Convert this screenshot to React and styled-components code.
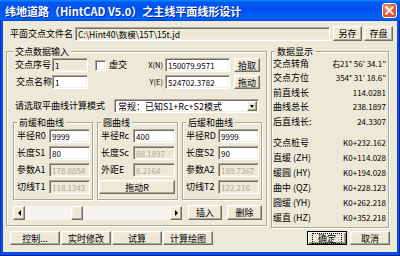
import React from "react";
import styled, { createGlobalStyle, css } from "styled-components";

const FONT = `"Noto Sans CJK SC", "Noto Sans", sans-serif`;

const GlobalStyle = createGlobalStyle`
  html, body { margin: 0; padding: 0; background: #ECE9D8; }
  body { font-family: ${FONT}; font-size: 9px; color: #000; }
  *, *::before, *::after { box-sizing: border-box; }
`;

const sunken = css`
  border: 1px solid;
  border-color: #ACA899 #FFFFFF #FFFFFF #ACA899;
  box-shadow: inset 1px 1px 0 #716F64, inset -1px -1px 0 #F1EFE2;
`;
const raised = css`
  border: 1px solid;
  border-color: #FFFFFF #716F64 #716F64 #FFFFFF;
  box-shadow: inset -1px -1px 0 #ACA899, inset 1px 1px 0 #F1EFE2;
`;

const Window = styled.div`
  width: 400px;
  height: 256px;
  display: flex;
  flex-direction: column;
  overflow: hidden;
`;
const TitleBar = styled.div`
  flex: none;
  height: 21px;
  display: flex;
  align-items: center;
  justify-content: space-between;
  padding: 0 3px 0 5px;
  background: linear-gradient(to bottom, #0A8CFF 0%, #0058EE 12%, #0050EE 45%, #0063FA 85%, #005AF5 93%, #0040D8 100%);
`;
const Title = styled.span`
  color: #fff;
  font-family: ${FONT};
  font-weight: 700;
  font-size: 11px;
  line-height: 13px;
  padding-top: 1px;
  white-space: nowrap;
  text-shadow: 1px 1px 0 #0A2A9A;
`;
const CloseBtn = styled.div`
  width: 15px;
  height: 15px;
  border: 1px solid #fff;
  border-radius: 3px;
  background: radial-gradient(circle at 35% 30%, #F2A58C 0%, #E5603A 45%, #C8401C 100%);
  display: flex;
  align-items: center;
  justify-content: center;
`;
const Frame = styled.div`
  flex: 1;
  display: flex;
  padding: 0 3px 4px 3px;
  background: #0A4FE0;
  box-shadow: inset 1px 0 0 #0831D9, inset -1px 0 0 #001EA0, inset 0 -1px 0 #001EA0;
`;
const Body = styled.div`
  flex: 1;
  background: #ECE9D8;
  display: flex;
  flex-direction: column;
  padding: 0 4px 0 3px;
`;

const Text = styled.span`
  font-size: ${(p) => p.$size || 9}px;
  line-height: ${(p) => p.$lh || 14}px;
  white-space: nowrap;
  color: ${(p) => (p.$muted ? "#ACA899" : "#000")};
  margin-left: ${(p) => p.$ml || 0}px;
  text-align: ${(p) => p.$align || "left"};
  padding-right: ${(p) => p.$pr || 0}px;
`;

const Field = styled.input`
  display: block;
  width: ${(p) => (p.$w ? `${p.$w}px` : "100%")};
  height: 14px;
  margin: 0;
  padding: 0 0 0 2px;
  font-family: ${FONT};
  font-size: 8px;
  color: ${(p) => (p.$off ? "#ACA899" : "#000")};
  background: ${(p) => (p.$white ? "#FFFFFF" : "#ECE9D8")};
  outline: none;
  ${sunken};
`;

const Btn = styled.button`
  width: ${(p) => (p.$w ? `${p.$w}px` : "100%")};
  height: ${(p) => p.$h || 15}px;
  margin: 0 0 0 ${(p) => p.$ml || 0}px;
  padding: 0;
  font-family: ${FONT};
  font-size: 9px;
  color: #000;
  background: #ECE9D8;
  display: flex;
  align-items: center;
  justify-content: center;
  justify-self: end;
  white-space: nowrap;
  ${raised};
  ${(p) =>
    p.$default &&
    css`
      border-color: #000;
      box-shadow: inset 1px 1px 0 #fff, inset -1px -1px 0 #716F64, inset -2px -2px 0 #ACA899;
    `}
`;
const FocusText = styled.span`
  border: 1px dotted #000;
  padding: 0 5px;
  line-height: 9px;
`;

const FileRow = styled.div`
  display: flex;
  align-items: center;
  height: 15px;
  margin-top: 5px;
`;

const MainRow = styled.div`
  display: flex;
  align-items: flex-start;
  gap: 4px;
  margin-top: 5px;
`;

const GroupBox = styled.fieldset`
  margin: 0;
  min-width: 0;
  width: ${(p) => p.$w}px;
  height: ${(p) => p.$h}px;
  padding: ${(p) => p.$pad};
  border: 1px solid #ACA899;
  box-shadow: inset 1px 1px 0 #fff, 1px 1px 0 #fff;
`;
const Legend = styled.legend`
  padding: 0 2px;
  margin-left: ${(p) => p.$ml || 0}px;
  font-size: 9px;
  line-height: 11px;
  background: #ECE9D8;
`;

const CoordGrid = styled.div`
  display: grid;
  grid-template-columns: 39px 36px 55px 22px 65px 30px;
  grid-auto-rows: 14px;
  row-gap: 3px;
  align-items: center;
`;
const CheckWrap = styled.div`
  display: flex;
  align-items: center;
  padding-left: 7px;
`;
const Check = styled.span`
  width: 11px;
  height: 11px;
  background: #fff;
  ${sunken};
`;

const ModeRow = styled.div`
  display: flex;
  align-items: center;
  justify-content: space-between;
  height: 14px;
  margin-top: 10px;
  padding: 0 3px 0 2px;
`;
const Combo = styled.div`
  width: 145px;
  height: 14px;
  display: flex;
  align-items: stretch;
  background: #fff;
  ${sunken};
  padding: 1px;
`;
const ComboText = styled.span`
  flex: 1;
  font-size: 9px;
  line-height: 11px;
  padding-left: 2px;
  white-space: nowrap;
`;
const ComboBtn = styled.span`
  width: 10px;
  background: #ECE9D8;
  display: flex;
  align-items: center;
  justify-content: center;
  ${raised};
`;
const Tri = styled.span`
  width: 0;
  height: 0;
  ${(p) =>
    p.$dir === "down"
      ? css`
          border-left: 2.5px solid transparent;
          border-right: 2.5px solid transparent;
          border-top: 3px solid #000;
        `
      : p.$dir === "left"
      ? css`
          border-top: 3px solid transparent;
          border-bottom: 3px solid transparent;
          border-right: 3px solid #000;
        `
      : css`
          border-top: 3px solid transparent;
          border-bottom: 3px solid transparent;
          border-left: 3px solid #000;
        `}
`;

const SubRow = styled.div`
  display: flex;
  gap: 4px;
  margin-top: 4px;
`;
const SubGrid = styled.div`
  display: grid;
  grid-template-columns: 32px 1fr;
  grid-auto-rows: 14px;
  row-gap: 3px;
  align-items: center;
`;
const SpanBtn = styled(Btn)`
  grid-column: 1 / -1;
  width: calc(100% + 2px);
  margin-left: -1px;
  height: 14px;
`;

const ScrollRow = styled.div`
  display: flex;
  align-items: center;
  height: 15px;
  margin-top: 5px;
`;
const Scroll = styled.div`
  width: 169px;
  height: 14px;
  display: flex;
  background: #F5F4EF;
`;
const ScrollBtn = styled.span`
  width: 12px;
  height: 14px;
  flex: none;
  background: #ECE9D8;
  display: flex;
  align-items: center;
  justify-content: center;
  ${raised};
`;
const Thumb = styled(ScrollBtn)`
  margin-left: ${(p) => p.$offset}px;
`;
const Track = styled.span`
  flex: 1;
`;

const DataList = styled.div`
  margin-top: -1px;
  display: flex;
  flex-direction: column;
`;
const DataRow = styled.div`
  height: ${(p) => p.$h || 15}px;
  display: flex;
  align-items: center;
  justify-content: space-between;
`;
const DataGap = styled.div`
  height: 6px;
`;

const BottomRow = styled.div`
  display: flex;
  align-items: center;
  gap: 1px;
  height: 14px;
  margin-top: 3px;
  padding: 0 3px 0 4px;
`;
const Push = styled.div`
  flex: 1;
`;

const leftFields = [
  ["半径R0", "9999", false],
  ["长度S1", "80", false],
  ["参数A1", "178.8854", true],
  ["切线T1", "118.1343", true],
];
const midFields = [
  ["半径Rc", "400", false],
  ["长度Sc", "88.1897", true],
  ["外距E", "8.2164", true],
];
const rightFields = [
  ["半径RD", "9999", false],
  ["长度S2", "90", false],
  ["参数A2", "189.7367", true],
  ["切线T2", "122.216", true],
];
const dataTop = [
  ["交点转角", "右21° 56′ 34.1″"],
  ["交点方位", "354° 31′ 18.6″"],
  ["前直线长", "114.0281"],
  ["曲线总长", "238.1897"],
  ["后直线长:", "24.3307"],
];
const dataBottom = [
  ["交点桩号", "K0+232.162"],
  ["直缓 (ZH)", "K0+114.028"],
  ["缓圆 (HY)", "K0+194.028"],
  ["曲中 (QZ)", "K0+228.123"],
  ["圆缓 (YH)", "K0+262.218"],
  ["缓直 (HZ)", "K0+352.218"],
];

function FieldRows({ rows }) {
  return rows.map(([label, value, off]) => (
    <React.Fragment key={label}>
      <Text>{label}</Text>
      <Field readOnly value={value} $white={!off} $off={off} />
    </React.Fragment>
  ));
}

function DataRows({ rows, h }) {
  return rows.map(([k, v]) => (
    <DataRow key={k} $h={h}>
      <Text $lh={11}>{k}</Text>
      <Text $lh={11} $size={8}>{v}</Text>
    </DataRow>
  ));
}

export default function App() {
  return (
    <>
      <GlobalStyle />
      <Window>
        <TitleBar>
          <Title>纬地道路（HintCAD V5.0）之主线平面线形设计</Title>
          <CloseBtn>
            <svg width="9" height="9" viewBox="0 0 9 9">
              <path d="M1 1 L8 8 M8 1 L1 8" stroke="#fff" strokeWidth="1.7" strokeLinecap="square" />
            </svg>
          </CloseBtn>
        </TitleBar>
        <Frame>
          <Body>
            <FileRow>
              <Text $ml={4} style={{ width: 65 }}>平面交点文件名</Text>
              <Field readOnly value="C:\Hint40\数模\15T\15t.jd" $w={255} style={{ fontSize: 8.5 }} />
              <Btn $w={29} $ml={3}>另存</Btn>
              <Btn $w={29} $ml={2}>存盘</Btn>
            </FileRow>

            <MainRow>
              <GroupBox $w={261} $h={180} $pad="1px 4px 5px 6px">
                <Legend>交点数据输入</Legend>
                <CoordGrid>
                  <Text $ml={2}>交点序号</Text>
                  <Field readOnly value="1" />
                  <CheckWrap>
                    <Check />
                    <Text $ml={3}>虚交</Text>
                  </CheckWrap>
                  <Text $size={7.5} $align="right" $pr={2}>X(N)</Text>
                  <Field readOnly value="150079.9571" $white />
                  <Btn $w={26} $h={14}>拾取</Btn>

                  <Text $ml={3}>交点名称</Text>
                  <Field readOnly value="1" $white />
                  <span />
                  <Text $size={7.5} $align="right" $pr={2}>Y(E)</Text>
                  <Field readOnly value="524702.3782" $white />
                  <Btn $w={26} $h={14}>拖动</Btn>
                </CoordGrid>

                <ModeRow>
                  <Text>请选取平曲线计算模式</Text>
                  <Combo>
                    <ComboText>常规：已知S1+Rc+S2模式</ComboText>
                    <ComboBtn>
                      <Tri $dir="down" />
                    </ComboBtn>
                  </Combo>
                </ModeRow>

                <SubRow>
                  <GroupBox $w={80} $h={83} $pad="1px 2px 5px 3px">
                    <Legend>前缓和曲线</Legend>
                    <SubGrid>
                      <FieldRows rows={leftFields} />
                    </SubGrid>
                  </GroupBox>
                  <GroupBox $w={81} $h={83} $pad="1px 2px 5px 3px">
                    <Legend>圆曲线</Legend>
                    <SubGrid>
                      <FieldRows rows={midFields} />
                      <SpanBtn>拖动R</SpanBtn>
                    </SubGrid>
                  </GroupBox>
                  <GroupBox $w={80} $h={83} $pad="1px 2px 5px 3px">
                    <Legend>后缓和曲线</Legend>
                    <SubGrid>
                      <FieldRows rows={rightFields} />
                    </SubGrid>
                  </GroupBox>
                </SubRow>

                <ScrollRow>
                  <Scroll>
                    <ScrollBtn>
                      <Tri $dir="left" />
                    </ScrollBtn>
                    <Thumb $offset={46} />
                    <Track />
                    <ScrollBtn>
                      <Tri $dir="right" />
                    </ScrollBtn>
                  </Scroll>
                  <Btn $w={34} $ml={6}>插入</Btn>
                  <Btn $w={35} $ml={5}>删除</Btn>
                </ScrollRow>
              </GroupBox>

              <GroupBox $w={118} $h={182} $pad="0 2px 0 1px">
                <Legend $ml={2}>数据显示</Legend>
                <DataList>
                  <DataRows rows={dataTop} h={14.5} />
                  <DataGap />
                  <DataRows rows={dataBottom} h={15} />
                </DataList>
              </GroupBox>
            </MainRow>

            <BottomRow>
              <Btn $w={50} $h={14}>控制...</Btn>
              <Btn $w={50} $h={14}>实时修改</Btn>
              <Btn $w={50} $h={14}>试算</Btn>
              <Btn $w={50} $h={14}>计算绘图</Btn>
              <Push />
              <Btn $w={40} $h={14} $default>
                <FocusText>确定</FocusText>
              </Btn>
              <Btn $w={40} $h={14} $ml={2}>取消</Btn>
            </BottomRow>
          </Body>
        </Frame>
      </Window>
    </>
  );
}
